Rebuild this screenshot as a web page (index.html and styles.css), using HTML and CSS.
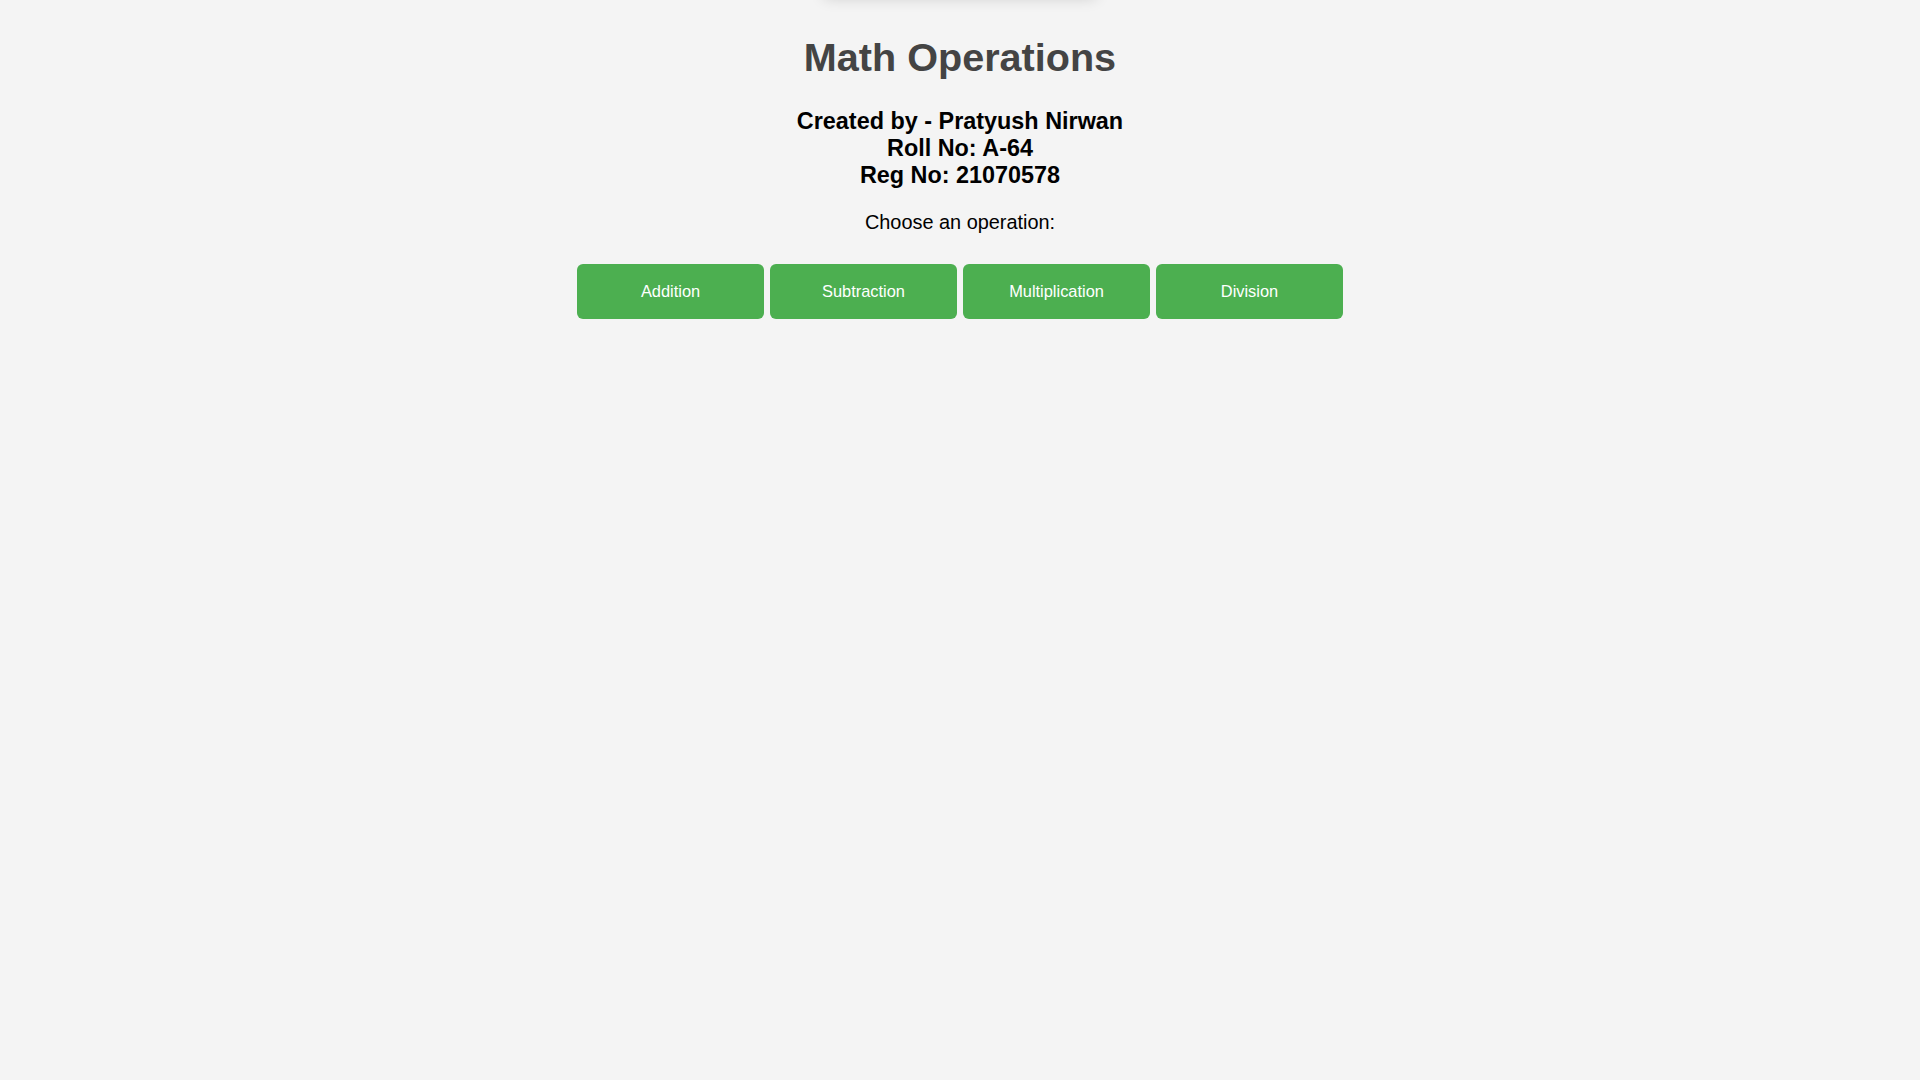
FILE: index.html
```html
<!DOCTYPE html>
<html lang="en">
<head>
<meta charset="utf-8">
<title>Math Operations</title>
<link rel="stylesheet" href="styles.css">
</head>
<body>
<div class="top-card"></div>
<main class="page">
  <h1 class="title">Math Operations</h1>
  <h3 class="author">Created by - Pratyush Nirwan<br>Roll No: A-64<br>Reg No: 21070578</h3>
  <p class="prompt">Choose an operation:</p>
  <div class="ops">
    <button class="op-btn">Addition</button>
    <button class="op-btn">Subtraction</button>
    <button class="op-btn">Multiplication</button>
    <button class="op-btn">Division</button>
  </div>
</main>
</body>
</html>
```

FILE: styles.css
```css
html, body {
  margin: 0;
  padding: 0;
}
body {
  background: #f4f4f4;
  font-family: "Liberation Sans", Arial, sans-serif;
  color: #000;
  min-height: 1080px;
  position: relative;
  overflow: hidden;
}
.top-card {
  position: absolute;
  left: 824px;
  top: -60px;
  width: 272px;
  height: 58px;
  background: #f4f4f4;
  box-shadow: 0 0 14px rgba(0, 0, 0, 0.16);
}
.page {
  text-align: center;
  padding-top: 35px;
}
.title {
  margin: 0;
  font-size: 39.6px;
  font-weight: bold;
  line-height: normal;
  color: #444;
}
.author {
  margin: 27.5px 0 0;
  font-size: 23.4px;
  font-weight: bold;
  line-height: normal;
  color: #000;
}
.prompt {
  margin: 22px 0 0;
  font-size: 19.9px;
  line-height: normal;
  color: #000;
}
.ops {
  display: flex;
  justify-content: center;
  gap: 6px;
  margin-top: 30px;
}
.op-btn {
  width: 187px;
  height: 55px;
  border: none;
  border-radius: 6px;
  background: #4caf50;
  color: #fff;
  font-family: "Liberation Sans", Arial, sans-serif;
  font-size: 16.4px;
  padding: 0;
  cursor: pointer;
}
```
